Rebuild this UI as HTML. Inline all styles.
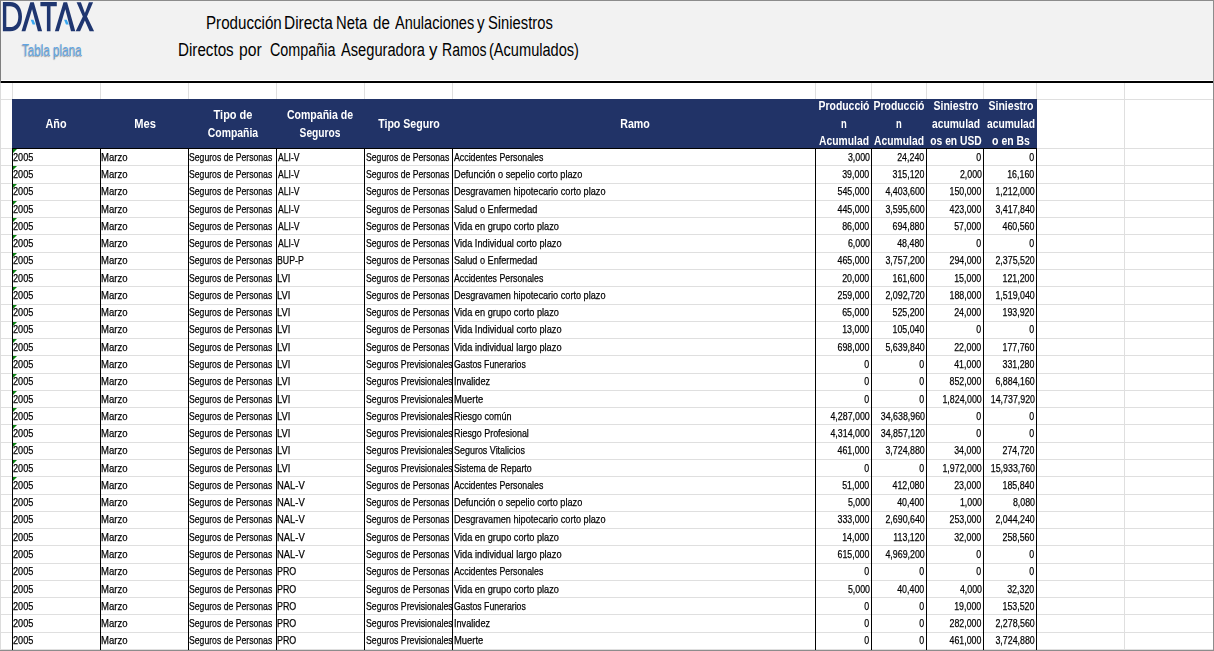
<!DOCTYPE html><html><head><meta charset="utf-8"><title>DATAX</title><style>
*{margin:0;padding:0;box-sizing:border-box}
html,body{width:1214px;height:651px;overflow:hidden;background:#fff}
body{position:relative;font-family:"Liberation Sans",sans-serif;color:#000}
.a{position:absolute}
.top{left:0;top:0;width:1214px;height:80px;background:#f2f2f2}
.bl{left:0;top:81px;width:1214px;height:2px;background:#000}
.t{position:absolute;white-space:nowrap;display:block;line-height:1}
.hl{position:absolute;left:0;width:1214px;height:1px;background:#dfdfdf}
.vl{position:absolute;width:1px;background:#dfdfdf}
.vb{position:absolute;width:1px;background:#000}
.c{position:absolute;overflow:hidden}
.c span{position:absolute;white-space:nowrap;line-height:1;-webkit-text-stroke:0.25px #000;font-size:11.2px;bottom:0}
.c .l{left:-1px;transform-origin:0 100%;transform:scaleX(0.8)}
.c .r{right:1.4px;transform-origin:100% 100%;transform:scaleX(0.79)}
.tri{position:absolute;width:0;height:0;border-top:4px solid #0a8212;border-right:4px solid transparent}
.hd{position:absolute;background:#213367;top:99px;height:50px}
.h{position:absolute;color:#fff;font-weight:bold;white-space:nowrap;line-height:1;font-size:12.0px;text-align:center;transform-origin:50% 50%;transform:translateX(-50%) scaleX(0.88)}
</style></head><body><div id="wrap" style="position:absolute;left:0;top:0;width:1214px;height:651px;opacity:0.999">
<div class="a top"></div>
<div class="a bl"></div>
<svg class="a" style="left:0;top:0" width="100" height="36" viewBox="0 0 100 36">
<g fill="#3aa8f0">
<path d="M30.7 19.8 H33.4 L35.4 24.4 H32.6 Z"/>
<path d="M64.1 19.8 H66.8 L68.8 24.4 H66 Z"/>
</g>
<g fill="#1f3670">
<path d="M2.9 2.1 H10.2 C17.6 2.1 22 8 22 16.7 C22 25.4 17.6 31.3 10.2 31.3 H2.9 Z M6.3 6.2 V27.1 H10 C15.2 27.1 18.3 23.3 18.3 16.7 C18.3 10 15.2 6.2 10 6.2 Z" fill-rule="evenodd"/>
<path d="M21.5 31.3 L30.3 2.3 H33.8 L42.1 31.3 H37.9 L32.05 9.2 L25.4 31.3 Z"/>
<path d="M40.4 2.1 H56.8 V6.3 H50.5 V31.3 H46.9 V6.3 H40.4 Z"/>
<path d="M54.9 31.3 L63.5 2.3 H67.1 L75.3 31.3 H71 L65.3 9.2 L58.8 31.3 Z"/>
<path d="M76.6 2.3 H80.9 L84.9 12.9 L88.9 2.3 H93.1 L87 16.6 L94.1 31.3 H89.6 L84.9 20.4 L80.1 31.3 H75.7 L82.8 16.6 Z"/>
</g>
</svg>
<div class="t" id="tp" style="left:22px;top:42.2px;font-size:16.2px;color:#5fa5e3;text-shadow:-0.6px 0.9px 1.2px rgba(0,0,0,.38);transform-origin:0 50%;transform:scaleX(0.72)">Tabla plana</div>

<div class="t" style="left:205.64px;top:14.4px;font-size:18px;transform-origin:0 50%;transform:scaleX(0.8412)">Producción</div>
<div class="t" style="left:283.52px;top:14.4px;font-size:18px;transform-origin:0 50%;transform:scaleX(0.8559)">Directa</div>
<div class="t" style="left:335.97px;top:14.4px;font-size:18px;transform-origin:0 50%;transform:scaleX(0.8219)">Neta</div>
<div class="t" style="left:373.17px;top:14.4px;font-size:18px;transform-origin:0 50%;transform:scaleX(0.8378)">de</div>
<div class="t" style="left:394.5px;top:14.4px;font-size:18px;transform-origin:0 50%;transform:scaleX(0.8072)">Anulaciones</div>
<div class="t" style="left:477.09px;top:14.4px;font-size:18px;transform-origin:0 50%;transform:scaleX(0.8457)">y</div>
<div class="t" style="left:487.98px;top:14.4px;font-size:18px;transform-origin:0 50%;transform:scaleX(0.8194)">Siniestros</div>
<div class="t" style="left:178.33px;top:41.2px;font-size:18px;transform-origin:0 50%;transform:scaleX(0.8438)">Directos</div>
<div class="t" style="left:238.72px;top:41.2px;font-size:18px;transform-origin:0 50%;transform:scaleX(0.8731)">por</div>
<div class="t" style="left:270.2px;top:41.2px;font-size:18px;transform-origin:0 50%;transform:scaleX(0.7975)">Compañia</div>
<div class="t" style="left:341.4px;top:41.2px;font-size:18px;transform-origin:0 50%;transform:scaleX(0.8145)">Aseguradora</div>
<div class="t" style="left:429.08px;top:41.2px;font-size:18px;transform-origin:0 50%;transform:scaleX(0.9371)">y</div>
<div class="t" style="left:441.53px;top:41.2px;font-size:18px;transform-origin:0 50%;transform:scaleX(0.78)">Ramos</div>
<div class="t" style="left:489.49px;top:41.2px;font-size:18px;transform-origin:0 50%;transform:scaleX(0.8101)">(Acumulados)</div>
<div class="hl" style="top:99px"></div>
<div class="hl" style="top:148px"></div>
<div class="hl" style="top:165px"></div>
<div class="hl" style="top:183px"></div>
<div class="hl" style="top:200px"></div>
<div class="hl" style="top:217px"></div>
<div class="hl" style="top:234px"></div>
<div class="hl" style="top:252px"></div>
<div class="hl" style="top:269px"></div>
<div class="hl" style="top:286px"></div>
<div class="hl" style="top:304px"></div>
<div class="hl" style="top:321px"></div>
<div class="hl" style="top:338px"></div>
<div class="hl" style="top:355px"></div>
<div class="hl" style="top:373px"></div>
<div class="hl" style="top:390px"></div>
<div class="hl" style="top:407px"></div>
<div class="hl" style="top:424px"></div>
<div class="hl" style="top:442px"></div>
<div class="hl" style="top:459px"></div>
<div class="hl" style="top:476px"></div>
<div class="hl" style="top:494px"></div>
<div class="hl" style="top:511px"></div>
<div class="hl" style="top:528px"></div>
<div class="hl" style="top:545px"></div>
<div class="hl" style="top:563px"></div>
<div class="hl" style="top:580px"></div>
<div class="hl" style="top:597px"></div>
<div class="hl" style="top:614px"></div>
<div class="hl" style="top:632px"></div>
<div class="hl" style="top:649px"></div>
<div class="vl" style="left:12px;top:83px;height:568px"></div>
<div class="vl" style="left:100px;top:83px;height:568px"></div>
<div class="vl" style="left:188px;top:83px;height:568px"></div>
<div class="vl" style="left:276px;top:83px;height:568px"></div>
<div class="vl" style="left:364px;top:83px;height:568px"></div>
<div class="vl" style="left:452px;top:83px;height:568px"></div>
<div class="vl" style="left:815px;top:83px;height:568px"></div>
<div class="vl" style="left:871px;top:83px;height:568px"></div>
<div class="vl" style="left:926px;top:83px;height:568px"></div>
<div class="vl" style="left:983px;top:83px;height:568px"></div>
<div class="vl" style="left:1036px;top:83px;height:568px"></div>
<div class="vl" style="left:1124px;top:83px;height:568px"></div>
<div class="hd" style="left:12px;width:1025px"></div>
<div class="h" style="left:56.3px;top:118.30px;transform:translateX(-50%) scaleX(0.9022)">Año</div>
<div class="h" style="left:144.6px;top:118.30px;transform:translateX(-50%) scaleX(0.9266)">Mes</div>
<div class="h" style="left:233px;top:108.90px;transform:translateX(-50%) scaleX(0.9146)">Tipo de</div>
<div class="h" style="left:233px;top:126.50px;transform:translateX(-50%) scaleX(0.8677)">Compañia</div>
<div class="h" style="left:320.3px;top:108.90px;transform:translateX(-50%) scaleX(0.8779)">Compañia de</div>
<div class="h" style="left:320.3px;top:126.50px;transform:translateX(-50%) scaleX(0.8509)">Seguros</div>
<div class="h" style="left:408.8px;top:118.30px;transform:translateX(-50%) scaleX(0.8839)">Tipo Seguro</div>
<div class="h" style="left:634.7px;top:118.30px;transform:translateX(-50%) scaleX(0.8872)">Ramo</div>
<div class="h" style="left:843.5px;top:100.10px;transform:translateX(-50%) scaleX(0.8678)">Producció</div>
<div class="h" style="left:843.5px;top:117.70px;transform:translateX(-50%) scaleX(0.783)">n</div>
<div class="h" style="left:843.5px;top:135.30px;transform:translateX(-50%) scaleX(0.8598)">Acumulad</div>
<div class="h" style="left:899px;top:100.10px;transform:translateX(-50%) scaleX(0.8678)">Producció</div>
<div class="h" style="left:899px;top:117.70px;transform:translateX(-50%) scaleX(0.783)">n</div>
<div class="h" style="left:899px;top:135.30px;transform:translateX(-50%) scaleX(0.8598)">Acumulad</div>
<div class="h" style="left:956px;top:100.10px;transform:translateX(-50%) scaleX(0.8772)">Siniestro</div>
<div class="h" style="left:956px;top:117.70px;transform:translateX(-50%) scaleX(0.8565)">acumulad</div>
<div class="h" style="left:956px;top:135.30px;transform:translateX(-50%) scaleX(0.8576)">os en USD</div>
<div class="h" style="left:1010.5px;top:100.10px;transform:translateX(-50%) scaleX(0.8772)">Siniestro</div>
<div class="h" style="left:1010.5px;top:117.70px;transform:translateX(-50%) scaleX(0.8565)">acumulad</div>
<div class="h" style="left:1010.5px;top:135.30px;transform:translateX(-50%) scaleX(0.8732)">o en Bs</div>
<div class="c" style="left:13px;top:149px;width:87px;height:16px"><span class="l" style="bottom:2.30px;left:-0.11px;transform:scaleX(0.8209)">2005</span></div>
<div class="c" style="left:101px;top:149px;width:87px;height:16px"><span class="l" style="bottom:2.30px;left:-0.15px;transform:scaleX(0.8538)">Marzo</span></div>
<div class="c" style="left:189px;top:149px;width:87px;height:16px"><span class="l" style="bottom:2.30px;left:0.21px;transform:scaleX(0.7738)">Seguros de Personas</span></div>
<div class="c" style="left:277px;top:149px;width:87px;height:16px"><span class="l" style="bottom:2.30px;left:0.80px;transform:scaleX(0.7713)">ALI-V</span></div>
<div class="c" style="left:365px;top:149px;width:87px;height:16px"><span class="l" style="bottom:2.30px;left:0.91px;transform:scaleX(0.7738)">Seguros de Personas</span></div>
<div class="c" style="left:453px;top:149px;width:362px;height:16px"><span class="l" style="bottom:2.30px;left:0.79px;transform:scaleX(0.785)">Accidentes Personales</span></div>
<div class="c" style="left:816px;top:149px;width:55px;height:16px"><span class="r" style="bottom:2.30px">3,000</span></div>
<div class="c" style="left:872px;top:149px;width:54px;height:16px"><span class="r" style="bottom:2.30px">24,240</span></div>
<div class="c" style="left:927px;top:149px;width:56px;height:16px"><span class="r" style="bottom:2.30px">0</span></div>
<div class="c" style="left:984px;top:149px;width:52px;height:16px"><span class="r" style="bottom:2.30px">0</span></div>
<div class="tri" style="left:13px;top:149px"></div>
<div class="c" style="left:13px;top:166px;width:87px;height:17px"><span class="l" style="bottom:3.30px;left:-0.11px;transform:scaleX(0.8209)">2005</span></div>
<div class="c" style="left:101px;top:166px;width:87px;height:17px"><span class="l" style="bottom:3.30px;left:-0.15px;transform:scaleX(0.8538)">Marzo</span></div>
<div class="c" style="left:189px;top:166px;width:87px;height:17px"><span class="l" style="bottom:3.30px;left:0.21px;transform:scaleX(0.7738)">Seguros de Personas</span></div>
<div class="c" style="left:277px;top:166px;width:87px;height:17px"><span class="l" style="bottom:3.30px;left:0.80px;transform:scaleX(0.7713)">ALI-V</span></div>
<div class="c" style="left:365px;top:166px;width:87px;height:17px"><span class="l" style="bottom:3.30px;left:0.91px;transform:scaleX(0.7738)">Seguros de Personas</span></div>
<div class="c" style="left:453px;top:166px;width:362px;height:17px"><span class="l" style="bottom:3.30px;left:0.78px;transform:scaleX(0.822)">Defunción o sepelio corto plazo</span></div>
<div class="c" style="left:816px;top:166px;width:55px;height:17px"><span class="r" style="bottom:3.30px">39,000</span></div>
<div class="c" style="left:872px;top:166px;width:54px;height:17px"><span class="r" style="bottom:3.30px">315,120</span></div>
<div class="c" style="left:927px;top:166px;width:56px;height:17px"><span class="r" style="bottom:3.30px">2,000</span></div>
<div class="c" style="left:984px;top:166px;width:52px;height:17px"><span class="r" style="bottom:3.30px">16,160</span></div>
<div class="tri" style="left:13px;top:166px"></div>
<div class="c" style="left:13px;top:184px;width:87px;height:16px"><span class="l" style="bottom:3.30px;left:-0.11px;transform:scaleX(0.8209)">2005</span></div>
<div class="c" style="left:101px;top:184px;width:87px;height:16px"><span class="l" style="bottom:3.30px;left:-0.15px;transform:scaleX(0.8538)">Marzo</span></div>
<div class="c" style="left:189px;top:184px;width:87px;height:16px"><span class="l" style="bottom:3.30px;left:0.21px;transform:scaleX(0.7738)">Seguros de Personas</span></div>
<div class="c" style="left:277px;top:184px;width:87px;height:16px"><span class="l" style="bottom:3.30px;left:0.80px;transform:scaleX(0.7713)">ALI-V</span></div>
<div class="c" style="left:365px;top:184px;width:87px;height:16px"><span class="l" style="bottom:3.30px;left:0.91px;transform:scaleX(0.7738)">Seguros de Personas</span></div>
<div class="c" style="left:453px;top:184px;width:362px;height:16px"><span class="l" style="bottom:3.30px;left:0.78px;transform:scaleX(0.8174)">Desgravamen hipotecario corto plazo</span></div>
<div class="c" style="left:816px;top:184px;width:55px;height:16px"><span class="r" style="bottom:3.30px">545,000</span></div>
<div class="c" style="left:872px;top:184px;width:54px;height:16px"><span class="r" style="bottom:3.30px">4,403,600</span></div>
<div class="c" style="left:927px;top:184px;width:56px;height:16px"><span class="r" style="bottom:3.30px">150,000</span></div>
<div class="c" style="left:984px;top:184px;width:52px;height:16px"><span class="r" style="bottom:3.30px">1,212,000</span></div>
<div class="tri" style="left:13px;top:184px"></div>
<div class="c" style="left:13px;top:201px;width:87px;height:16px"><span class="l" style="bottom:2.30px;left:-0.11px;transform:scaleX(0.8209)">2005</span></div>
<div class="c" style="left:101px;top:201px;width:87px;height:16px"><span class="l" style="bottom:2.30px;left:-0.15px;transform:scaleX(0.8538)">Marzo</span></div>
<div class="c" style="left:189px;top:201px;width:87px;height:16px"><span class="l" style="bottom:2.30px;left:0.21px;transform:scaleX(0.7738)">Seguros de Personas</span></div>
<div class="c" style="left:277px;top:201px;width:87px;height:16px"><span class="l" style="bottom:2.30px;left:0.80px;transform:scaleX(0.7713)">ALI-V</span></div>
<div class="c" style="left:365px;top:201px;width:87px;height:16px"><span class="l" style="bottom:2.30px;left:0.91px;transform:scaleX(0.7738)">Seguros de Personas</span></div>
<div class="c" style="left:453px;top:201px;width:362px;height:16px"><span class="l" style="bottom:2.30px;left:1.09px;transform:scaleX(0.8169)">Salud o Enfermedad</span></div>
<div class="c" style="left:816px;top:201px;width:55px;height:16px"><span class="r" style="bottom:2.30px">445,000</span></div>
<div class="c" style="left:872px;top:201px;width:54px;height:16px"><span class="r" style="bottom:2.30px">3,595,600</span></div>
<div class="c" style="left:927px;top:201px;width:56px;height:16px"><span class="r" style="bottom:2.30px">423,000</span></div>
<div class="c" style="left:984px;top:201px;width:52px;height:16px"><span class="r" style="bottom:2.30px">3,417,840</span></div>
<div class="tri" style="left:13px;top:201px"></div>
<div class="c" style="left:13px;top:218px;width:87px;height:16px"><span class="l" style="bottom:2.30px;left:-0.11px;transform:scaleX(0.8209)">2005</span></div>
<div class="c" style="left:101px;top:218px;width:87px;height:16px"><span class="l" style="bottom:2.30px;left:-0.15px;transform:scaleX(0.8538)">Marzo</span></div>
<div class="c" style="left:189px;top:218px;width:87px;height:16px"><span class="l" style="bottom:2.30px;left:0.21px;transform:scaleX(0.7738)">Seguros de Personas</span></div>
<div class="c" style="left:277px;top:218px;width:87px;height:16px"><span class="l" style="bottom:2.30px;left:0.80px;transform:scaleX(0.7713)">ALI-V</span></div>
<div class="c" style="left:365px;top:218px;width:87px;height:16px"><span class="l" style="bottom:2.30px;left:0.91px;transform:scaleX(0.7738)">Seguros de Personas</span></div>
<div class="c" style="left:453px;top:218px;width:362px;height:16px"><span class="l" style="bottom:2.30px;left:1.40px;transform:scaleX(0.8244)">Vida en grupo corto plazo</span></div>
<div class="c" style="left:816px;top:218px;width:55px;height:16px"><span class="r" style="bottom:2.30px">86,000</span></div>
<div class="c" style="left:872px;top:218px;width:54px;height:16px"><span class="r" style="bottom:2.30px">694,880</span></div>
<div class="c" style="left:927px;top:218px;width:56px;height:16px"><span class="r" style="bottom:2.30px">57,000</span></div>
<div class="c" style="left:984px;top:218px;width:52px;height:16px"><span class="r" style="bottom:2.30px">460,560</span></div>
<div class="tri" style="left:13px;top:218px"></div>
<div class="c" style="left:13px;top:235px;width:87px;height:17px"><span class="l" style="bottom:3.30px;left:-0.11px;transform:scaleX(0.8209)">2005</span></div>
<div class="c" style="left:101px;top:235px;width:87px;height:17px"><span class="l" style="bottom:3.30px;left:-0.15px;transform:scaleX(0.8538)">Marzo</span></div>
<div class="c" style="left:189px;top:235px;width:87px;height:17px"><span class="l" style="bottom:3.30px;left:0.21px;transform:scaleX(0.7738)">Seguros de Personas</span></div>
<div class="c" style="left:277px;top:235px;width:87px;height:17px"><span class="l" style="bottom:3.30px;left:0.80px;transform:scaleX(0.7713)">ALI-V</span></div>
<div class="c" style="left:365px;top:235px;width:87px;height:17px"><span class="l" style="bottom:3.30px;left:0.91px;transform:scaleX(0.7738)">Seguros de Personas</span></div>
<div class="c" style="left:453px;top:235px;width:362px;height:17px"><span class="l" style="bottom:3.30px;left:1.40px;transform:scaleX(0.8246)">Vida Individual corto plazo</span></div>
<div class="c" style="left:816px;top:235px;width:55px;height:17px"><span class="r" style="bottom:3.30px">6,000</span></div>
<div class="c" style="left:872px;top:235px;width:54px;height:17px"><span class="r" style="bottom:3.30px">48,480</span></div>
<div class="c" style="left:927px;top:235px;width:56px;height:17px"><span class="r" style="bottom:3.30px">0</span></div>
<div class="c" style="left:984px;top:235px;width:52px;height:17px"><span class="r" style="bottom:3.30px">0</span></div>
<div class="tri" style="left:13px;top:235px"></div>
<div class="c" style="left:13px;top:253px;width:87px;height:16px"><span class="l" style="bottom:3.30px;left:-0.11px;transform:scaleX(0.8209)">2005</span></div>
<div class="c" style="left:101px;top:253px;width:87px;height:16px"><span class="l" style="bottom:3.30px;left:-0.15px;transform:scaleX(0.8538)">Marzo</span></div>
<div class="c" style="left:189px;top:253px;width:87px;height:16px"><span class="l" style="bottom:3.30px;left:0.21px;transform:scaleX(0.7738)">Seguros de Personas</span></div>
<div class="c" style="left:277px;top:253px;width:87px;height:16px"><span class="l" style="bottom:3.30px;left:0.11px;transform:scaleX(0.7817)">BUP-P</span></div>
<div class="c" style="left:365px;top:253px;width:87px;height:16px"><span class="l" style="bottom:3.30px;left:0.91px;transform:scaleX(0.7738)">Seguros de Personas</span></div>
<div class="c" style="left:453px;top:253px;width:362px;height:16px"><span class="l" style="bottom:3.30px;left:1.09px;transform:scaleX(0.8169)">Salud o Enfermedad</span></div>
<div class="c" style="left:816px;top:253px;width:55px;height:16px"><span class="r" style="bottom:3.30px">465,000</span></div>
<div class="c" style="left:872px;top:253px;width:54px;height:16px"><span class="r" style="bottom:3.30px">3,757,200</span></div>
<div class="c" style="left:927px;top:253px;width:56px;height:16px"><span class="r" style="bottom:3.30px">294,000</span></div>
<div class="c" style="left:984px;top:253px;width:52px;height:16px"><span class="r" style="bottom:3.30px">2,375,520</span></div>
<div class="tri" style="left:13px;top:253px"></div>
<div class="c" style="left:13px;top:270px;width:87px;height:16px"><span class="l" style="bottom:2.30px;left:-0.11px;transform:scaleX(0.8209)">2005</span></div>
<div class="c" style="left:101px;top:270px;width:87px;height:16px"><span class="l" style="bottom:2.30px;left:-0.15px;transform:scaleX(0.8538)">Marzo</span></div>
<div class="c" style="left:189px;top:270px;width:87px;height:16px"><span class="l" style="bottom:2.30px;left:0.21px;transform:scaleX(0.7738)">Seguros de Personas</span></div>
<div class="c" style="left:277px;top:270px;width:87px;height:16px"><span class="l" style="bottom:2.30px;left:0.06px;transform:scaleX(0.8354)">LVI</span></div>
<div class="c" style="left:365px;top:270px;width:87px;height:16px"><span class="l" style="bottom:2.30px;left:0.91px;transform:scaleX(0.7738)">Seguros de Personas</span></div>
<div class="c" style="left:453px;top:270px;width:362px;height:16px"><span class="l" style="bottom:2.30px;left:0.79px;transform:scaleX(0.785)">Accidentes Personales</span></div>
<div class="c" style="left:816px;top:270px;width:55px;height:16px"><span class="r" style="bottom:2.30px">20,000</span></div>
<div class="c" style="left:872px;top:270px;width:54px;height:16px"><span class="r" style="bottom:2.30px">161,600</span></div>
<div class="c" style="left:927px;top:270px;width:56px;height:16px"><span class="r" style="bottom:2.30px">15,000</span></div>
<div class="c" style="left:984px;top:270px;width:52px;height:16px"><span class="r" style="bottom:2.30px">121,200</span></div>
<div class="tri" style="left:13px;top:270px"></div>
<div class="c" style="left:13px;top:287px;width:87px;height:17px"><span class="l" style="bottom:3.30px;left:-0.11px;transform:scaleX(0.8209)">2005</span></div>
<div class="c" style="left:101px;top:287px;width:87px;height:17px"><span class="l" style="bottom:3.30px;left:-0.15px;transform:scaleX(0.8538)">Marzo</span></div>
<div class="c" style="left:189px;top:287px;width:87px;height:17px"><span class="l" style="bottom:3.30px;left:0.21px;transform:scaleX(0.7738)">Seguros de Personas</span></div>
<div class="c" style="left:277px;top:287px;width:87px;height:17px"><span class="l" style="bottom:3.30px;left:0.06px;transform:scaleX(0.8354)">LVI</span></div>
<div class="c" style="left:365px;top:287px;width:87px;height:17px"><span class="l" style="bottom:3.30px;left:0.91px;transform:scaleX(0.7738)">Seguros de Personas</span></div>
<div class="c" style="left:453px;top:287px;width:362px;height:17px"><span class="l" style="bottom:3.30px;left:0.78px;transform:scaleX(0.8174)">Desgravamen hipotecario corto plazo</span></div>
<div class="c" style="left:816px;top:287px;width:55px;height:17px"><span class="r" style="bottom:3.30px">259,000</span></div>
<div class="c" style="left:872px;top:287px;width:54px;height:17px"><span class="r" style="bottom:3.30px">2,092,720</span></div>
<div class="c" style="left:927px;top:287px;width:56px;height:17px"><span class="r" style="bottom:3.30px">188,000</span></div>
<div class="c" style="left:984px;top:287px;width:52px;height:17px"><span class="r" style="bottom:3.30px">1,519,040</span></div>
<div class="tri" style="left:13px;top:287px"></div>
<div class="c" style="left:13px;top:305px;width:87px;height:16px"><span class="l" style="bottom:3.30px;left:-0.11px;transform:scaleX(0.8209)">2005</span></div>
<div class="c" style="left:101px;top:305px;width:87px;height:16px"><span class="l" style="bottom:3.30px;left:-0.15px;transform:scaleX(0.8538)">Marzo</span></div>
<div class="c" style="left:189px;top:305px;width:87px;height:16px"><span class="l" style="bottom:3.30px;left:0.21px;transform:scaleX(0.7738)">Seguros de Personas</span></div>
<div class="c" style="left:277px;top:305px;width:87px;height:16px"><span class="l" style="bottom:3.30px;left:0.06px;transform:scaleX(0.8354)">LVI</span></div>
<div class="c" style="left:365px;top:305px;width:87px;height:16px"><span class="l" style="bottom:3.30px;left:0.91px;transform:scaleX(0.7738)">Seguros de Personas</span></div>
<div class="c" style="left:453px;top:305px;width:362px;height:16px"><span class="l" style="bottom:3.30px;left:1.40px;transform:scaleX(0.8244)">Vida en grupo corto plazo</span></div>
<div class="c" style="left:816px;top:305px;width:55px;height:16px"><span class="r" style="bottom:3.30px">65,000</span></div>
<div class="c" style="left:872px;top:305px;width:54px;height:16px"><span class="r" style="bottom:3.30px">525,200</span></div>
<div class="c" style="left:927px;top:305px;width:56px;height:16px"><span class="r" style="bottom:3.30px">24,000</span></div>
<div class="c" style="left:984px;top:305px;width:52px;height:16px"><span class="r" style="bottom:3.30px">193,920</span></div>
<div class="tri" style="left:13px;top:305px"></div>
<div class="c" style="left:13px;top:322px;width:87px;height:16px"><span class="l" style="bottom:3.30px;left:-0.11px;transform:scaleX(0.8209)">2005</span></div>
<div class="c" style="left:101px;top:322px;width:87px;height:16px"><span class="l" style="bottom:3.30px;left:-0.15px;transform:scaleX(0.8538)">Marzo</span></div>
<div class="c" style="left:189px;top:322px;width:87px;height:16px"><span class="l" style="bottom:3.30px;left:0.21px;transform:scaleX(0.7738)">Seguros de Personas</span></div>
<div class="c" style="left:277px;top:322px;width:87px;height:16px"><span class="l" style="bottom:3.30px;left:0.06px;transform:scaleX(0.8354)">LVI</span></div>
<div class="c" style="left:365px;top:322px;width:87px;height:16px"><span class="l" style="bottom:3.30px;left:0.91px;transform:scaleX(0.7738)">Seguros de Personas</span></div>
<div class="c" style="left:453px;top:322px;width:362px;height:16px"><span class="l" style="bottom:3.30px;left:1.40px;transform:scaleX(0.8246)">Vida Individual corto plazo</span></div>
<div class="c" style="left:816px;top:322px;width:55px;height:16px"><span class="r" style="bottom:3.30px">13,000</span></div>
<div class="c" style="left:872px;top:322px;width:54px;height:16px"><span class="r" style="bottom:3.30px">105,040</span></div>
<div class="c" style="left:927px;top:322px;width:56px;height:16px"><span class="r" style="bottom:3.30px">0</span></div>
<div class="c" style="left:984px;top:322px;width:52px;height:16px"><span class="r" style="bottom:3.30px">0</span></div>
<div class="tri" style="left:13px;top:322px"></div>
<div class="c" style="left:13px;top:339px;width:87px;height:16px"><span class="l" style="bottom:2.30px;left:-0.11px;transform:scaleX(0.8209)">2005</span></div>
<div class="c" style="left:101px;top:339px;width:87px;height:16px"><span class="l" style="bottom:2.30px;left:-0.15px;transform:scaleX(0.8538)">Marzo</span></div>
<div class="c" style="left:189px;top:339px;width:87px;height:16px"><span class="l" style="bottom:2.30px;left:0.21px;transform:scaleX(0.7738)">Seguros de Personas</span></div>
<div class="c" style="left:277px;top:339px;width:87px;height:16px"><span class="l" style="bottom:2.30px;left:0.06px;transform:scaleX(0.8354)">LVI</span></div>
<div class="c" style="left:365px;top:339px;width:87px;height:16px"><span class="l" style="bottom:2.30px;left:0.91px;transform:scaleX(0.7738)">Seguros de Personas</span></div>
<div class="c" style="left:453px;top:339px;width:362px;height:16px"><span class="l" style="bottom:2.30px;left:1.40px;transform:scaleX(0.8286)">Vida individual largo plazo</span></div>
<div class="c" style="left:816px;top:339px;width:55px;height:16px"><span class="r" style="bottom:2.30px">698,000</span></div>
<div class="c" style="left:872px;top:339px;width:54px;height:16px"><span class="r" style="bottom:2.30px">5,639,840</span></div>
<div class="c" style="left:927px;top:339px;width:56px;height:16px"><span class="r" style="bottom:2.30px">22,000</span></div>
<div class="c" style="left:984px;top:339px;width:52px;height:16px"><span class="r" style="bottom:2.30px">177,760</span></div>
<div class="tri" style="left:13px;top:339px"></div>
<div class="c" style="left:13px;top:356px;width:87px;height:17px"><span class="l" style="bottom:3.30px;left:-0.11px;transform:scaleX(0.8209)">2005</span></div>
<div class="c" style="left:101px;top:356px;width:87px;height:17px"><span class="l" style="bottom:3.30px;left:-0.15px;transform:scaleX(0.8538)">Marzo</span></div>
<div class="c" style="left:189px;top:356px;width:87px;height:17px"><span class="l" style="bottom:3.30px;left:0.21px;transform:scaleX(0.7738)">Seguros de Personas</span></div>
<div class="c" style="left:277px;top:356px;width:87px;height:17px"><span class="l" style="bottom:3.30px;left:0.06px;transform:scaleX(0.8354)">LVI</span></div>
<div class="c" style="left:365px;top:356px;width:87px;height:17px"><span class="l" style="bottom:3.30px;left:0.91px;transform:scaleX(0.7783)">Seguros Previsionales</span></div>
<div class="c" style="left:453px;top:356px;width:362px;height:17px"><span class="l" style="bottom:3.30px;left:1.02px;transform:scaleX(0.7802)">Gastos Funerarios</span></div>
<div class="c" style="left:816px;top:356px;width:55px;height:17px"><span class="r" style="bottom:3.30px">0</span></div>
<div class="c" style="left:872px;top:356px;width:54px;height:17px"><span class="r" style="bottom:3.30px">0</span></div>
<div class="c" style="left:927px;top:356px;width:56px;height:17px"><span class="r" style="bottom:3.30px">41,000</span></div>
<div class="c" style="left:984px;top:356px;width:52px;height:17px"><span class="r" style="bottom:3.30px">331,280</span></div>
<div class="tri" style="left:13px;top:356px"></div>
<div class="c" style="left:13px;top:374px;width:87px;height:16px"><span class="l" style="bottom:3.30px;left:-0.11px;transform:scaleX(0.8209)">2005</span></div>
<div class="c" style="left:101px;top:374px;width:87px;height:16px"><span class="l" style="bottom:3.30px;left:-0.15px;transform:scaleX(0.8538)">Marzo</span></div>
<div class="c" style="left:189px;top:374px;width:87px;height:16px"><span class="l" style="bottom:3.30px;left:0.21px;transform:scaleX(0.7738)">Seguros de Personas</span></div>
<div class="c" style="left:277px;top:374px;width:87px;height:16px"><span class="l" style="bottom:3.30px;left:0.06px;transform:scaleX(0.8354)">LVI</span></div>
<div class="c" style="left:365px;top:374px;width:87px;height:16px"><span class="l" style="bottom:3.30px;left:0.91px;transform:scaleX(0.7783)">Seguros Previsionales</span></div>
<div class="c" style="left:453px;top:374px;width:362px;height:16px"><span class="l" style="bottom:3.30px;left:0.68px;transform:scaleX(0.8164)">Invalidez</span></div>
<div class="c" style="left:816px;top:374px;width:55px;height:16px"><span class="r" style="bottom:3.30px">0</span></div>
<div class="c" style="left:872px;top:374px;width:54px;height:16px"><span class="r" style="bottom:3.30px">0</span></div>
<div class="c" style="left:927px;top:374px;width:56px;height:16px"><span class="r" style="bottom:3.30px">852,000</span></div>
<div class="c" style="left:984px;top:374px;width:52px;height:16px"><span class="r" style="bottom:3.30px">6,884,160</span></div>
<div class="tri" style="left:13px;top:374px"></div>
<div class="c" style="left:13px;top:391px;width:87px;height:16px"><span class="l" style="bottom:2.30px;left:-0.11px;transform:scaleX(0.8209)">2005</span></div>
<div class="c" style="left:101px;top:391px;width:87px;height:16px"><span class="l" style="bottom:2.30px;left:-0.15px;transform:scaleX(0.8538)">Marzo</span></div>
<div class="c" style="left:189px;top:391px;width:87px;height:16px"><span class="l" style="bottom:2.30px;left:0.21px;transform:scaleX(0.7738)">Seguros de Personas</span></div>
<div class="c" style="left:277px;top:391px;width:87px;height:16px"><span class="l" style="bottom:2.30px;left:0.06px;transform:scaleX(0.8354)">LVI</span></div>
<div class="c" style="left:365px;top:391px;width:87px;height:16px"><span class="l" style="bottom:2.30px;left:0.91px;transform:scaleX(0.7783)">Seguros Previsionales</span></div>
<div class="c" style="left:453px;top:391px;width:362px;height:16px"><span class="l" style="bottom:2.30px;left:0.76px;transform:scaleX(0.8388)">Muerte</span></div>
<div class="c" style="left:816px;top:391px;width:55px;height:16px"><span class="r" style="bottom:2.30px">0</span></div>
<div class="c" style="left:872px;top:391px;width:54px;height:16px"><span class="r" style="bottom:2.30px">0</span></div>
<div class="c" style="left:927px;top:391px;width:56px;height:16px"><span class="r" style="bottom:2.30px">1,824,000</span></div>
<div class="c" style="left:984px;top:391px;width:52px;height:16px"><span class="r" style="bottom:2.30px">14,737,920</span></div>
<div class="tri" style="left:13px;top:391px"></div>
<div class="c" style="left:13px;top:408px;width:87px;height:16px"><span class="l" style="bottom:2.30px;left:-0.11px;transform:scaleX(0.8209)">2005</span></div>
<div class="c" style="left:101px;top:408px;width:87px;height:16px"><span class="l" style="bottom:2.30px;left:-0.15px;transform:scaleX(0.8538)">Marzo</span></div>
<div class="c" style="left:189px;top:408px;width:87px;height:16px"><span class="l" style="bottom:2.30px;left:0.21px;transform:scaleX(0.7738)">Seguros de Personas</span></div>
<div class="c" style="left:277px;top:408px;width:87px;height:16px"><span class="l" style="bottom:2.30px;left:0.06px;transform:scaleX(0.8354)">LVI</span></div>
<div class="c" style="left:365px;top:408px;width:87px;height:16px"><span class="l" style="bottom:2.30px;left:0.91px;transform:scaleX(0.7783)">Seguros Previsionales</span></div>
<div class="c" style="left:453px;top:408px;width:362px;height:16px"><span class="l" style="bottom:2.30px;left:0.79px;transform:scaleX(0.8057)">Riesgo común</span></div>
<div class="c" style="left:816px;top:408px;width:55px;height:16px"><span class="r" style="bottom:2.30px">4,287,000</span></div>
<div class="c" style="left:872px;top:408px;width:54px;height:16px"><span class="r" style="bottom:2.30px">34,638,960</span></div>
<div class="c" style="left:927px;top:408px;width:56px;height:16px"><span class="r" style="bottom:2.30px">0</span></div>
<div class="c" style="left:984px;top:408px;width:52px;height:16px"><span class="r" style="bottom:2.30px">0</span></div>
<div class="tri" style="left:13px;top:408px"></div>
<div class="c" style="left:13px;top:425px;width:87px;height:17px"><span class="l" style="bottom:3.30px;left:-0.11px;transform:scaleX(0.8209)">2005</span></div>
<div class="c" style="left:101px;top:425px;width:87px;height:17px"><span class="l" style="bottom:3.30px;left:-0.15px;transform:scaleX(0.8538)">Marzo</span></div>
<div class="c" style="left:189px;top:425px;width:87px;height:17px"><span class="l" style="bottom:3.30px;left:0.21px;transform:scaleX(0.7738)">Seguros de Personas</span></div>
<div class="c" style="left:277px;top:425px;width:87px;height:17px"><span class="l" style="bottom:3.30px;left:0.06px;transform:scaleX(0.8354)">LVI</span></div>
<div class="c" style="left:365px;top:425px;width:87px;height:17px"><span class="l" style="bottom:3.30px;left:0.91px;transform:scaleX(0.7783)">Seguros Previsionales</span></div>
<div class="c" style="left:453px;top:425px;width:362px;height:17px"><span class="l" style="bottom:3.30px;left:0.80px;transform:scaleX(0.7968)">Riesgo Profesional</span></div>
<div class="c" style="left:816px;top:425px;width:55px;height:17px"><span class="r" style="bottom:3.30px">4,314,000</span></div>
<div class="c" style="left:872px;top:425px;width:54px;height:17px"><span class="r" style="bottom:3.30px">34,857,120</span></div>
<div class="c" style="left:927px;top:425px;width:56px;height:17px"><span class="r" style="bottom:3.30px">0</span></div>
<div class="c" style="left:984px;top:425px;width:52px;height:17px"><span class="r" style="bottom:3.30px">0</span></div>
<div class="tri" style="left:13px;top:425px"></div>
<div class="c" style="left:13px;top:443px;width:87px;height:16px"><span class="l" style="bottom:3.30px;left:-0.11px;transform:scaleX(0.8209)">2005</span></div>
<div class="c" style="left:101px;top:443px;width:87px;height:16px"><span class="l" style="bottom:3.30px;left:-0.15px;transform:scaleX(0.8538)">Marzo</span></div>
<div class="c" style="left:189px;top:443px;width:87px;height:16px"><span class="l" style="bottom:3.30px;left:0.21px;transform:scaleX(0.7738)">Seguros de Personas</span></div>
<div class="c" style="left:277px;top:443px;width:87px;height:16px"><span class="l" style="bottom:3.30px;left:0.06px;transform:scaleX(0.8354)">LVI</span></div>
<div class="c" style="left:365px;top:443px;width:87px;height:16px"><span class="l" style="bottom:3.30px;left:0.91px;transform:scaleX(0.7783)">Seguros Previsionales</span></div>
<div class="c" style="left:453px;top:443px;width:362px;height:16px"><span class="l" style="bottom:3.30px;left:1.10px;transform:scaleX(0.8)">Seguros Vitalicios</span></div>
<div class="c" style="left:816px;top:443px;width:55px;height:16px"><span class="r" style="bottom:3.30px">461,000</span></div>
<div class="c" style="left:872px;top:443px;width:54px;height:16px"><span class="r" style="bottom:3.30px">3,724,880</span></div>
<div class="c" style="left:927px;top:443px;width:56px;height:16px"><span class="r" style="bottom:3.30px">34,000</span></div>
<div class="c" style="left:984px;top:443px;width:52px;height:16px"><span class="r" style="bottom:3.30px">274,720</span></div>
<div class="tri" style="left:13px;top:443px"></div>
<div class="c" style="left:13px;top:460px;width:87px;height:16px"><span class="l" style="bottom:2.30px;left:-0.11px;transform:scaleX(0.8209)">2005</span></div>
<div class="c" style="left:101px;top:460px;width:87px;height:16px"><span class="l" style="bottom:2.30px;left:-0.15px;transform:scaleX(0.8538)">Marzo</span></div>
<div class="c" style="left:189px;top:460px;width:87px;height:16px"><span class="l" style="bottom:2.30px;left:0.21px;transform:scaleX(0.7738)">Seguros de Personas</span></div>
<div class="c" style="left:277px;top:460px;width:87px;height:16px"><span class="l" style="bottom:2.30px;left:0.06px;transform:scaleX(0.8354)">LVI</span></div>
<div class="c" style="left:365px;top:460px;width:87px;height:16px"><span class="l" style="bottom:2.30px;left:0.91px;transform:scaleX(0.7783)">Seguros Previsionales</span></div>
<div class="c" style="left:453px;top:460px;width:362px;height:16px"><span class="l" style="bottom:2.30px;left:1.11px;transform:scaleX(0.7857)">Sistema de Reparto</span></div>
<div class="c" style="left:816px;top:460px;width:55px;height:16px"><span class="r" style="bottom:2.30px">0</span></div>
<div class="c" style="left:872px;top:460px;width:54px;height:16px"><span class="r" style="bottom:2.30px">0</span></div>
<div class="c" style="left:927px;top:460px;width:56px;height:16px"><span class="r" style="bottom:2.30px">1,972,000</span></div>
<div class="c" style="left:984px;top:460px;width:52px;height:16px"><span class="r" style="bottom:2.30px">15,933,760</span></div>
<div class="tri" style="left:13px;top:460px"></div>
<div class="c" style="left:13px;top:477px;width:87px;height:17px"><span class="l" style="bottom:3.30px;left:-0.11px;transform:scaleX(0.8209)">2005</span></div>
<div class="c" style="left:101px;top:477px;width:87px;height:17px"><span class="l" style="bottom:3.30px;left:-0.15px;transform:scaleX(0.8538)">Marzo</span></div>
<div class="c" style="left:189px;top:477px;width:87px;height:17px"><span class="l" style="bottom:3.30px;left:0.21px;transform:scaleX(0.7738)">Seguros de Personas</span></div>
<div class="c" style="left:277px;top:477px;width:87px;height:17px"><span class="l" style="bottom:3.30px;left:0.06px;transform:scaleX(0.8406)">NAL-V</span></div>
<div class="c" style="left:365px;top:477px;width:87px;height:17px"><span class="l" style="bottom:3.30px;left:0.91px;transform:scaleX(0.7738)">Seguros de Personas</span></div>
<div class="c" style="left:453px;top:477px;width:362px;height:17px"><span class="l" style="bottom:3.30px;left:0.79px;transform:scaleX(0.785)">Accidentes Personales</span></div>
<div class="c" style="left:816px;top:477px;width:55px;height:17px"><span class="r" style="bottom:3.30px">51,000</span></div>
<div class="c" style="left:872px;top:477px;width:54px;height:17px"><span class="r" style="bottom:3.30px">412,080</span></div>
<div class="c" style="left:927px;top:477px;width:56px;height:17px"><span class="r" style="bottom:3.30px">23,000</span></div>
<div class="c" style="left:984px;top:477px;width:52px;height:17px"><span class="r" style="bottom:3.30px">185,840</span></div>
<div class="tri" style="left:13px;top:477px"></div>
<div class="c" style="left:13px;top:495px;width:87px;height:16px"><span class="l" style="bottom:3.30px;left:-0.11px;transform:scaleX(0.8209)">2005</span></div>
<div class="c" style="left:101px;top:495px;width:87px;height:16px"><span class="l" style="bottom:3.30px;left:-0.15px;transform:scaleX(0.8538)">Marzo</span></div>
<div class="c" style="left:189px;top:495px;width:87px;height:16px"><span class="l" style="bottom:3.30px;left:0.21px;transform:scaleX(0.7738)">Seguros de Personas</span></div>
<div class="c" style="left:277px;top:495px;width:87px;height:16px"><span class="l" style="bottom:3.30px;left:0.06px;transform:scaleX(0.8406)">NAL-V</span></div>
<div class="c" style="left:365px;top:495px;width:87px;height:16px"><span class="l" style="bottom:3.30px;left:0.91px;transform:scaleX(0.7738)">Seguros de Personas</span></div>
<div class="c" style="left:453px;top:495px;width:362px;height:16px"><span class="l" style="bottom:3.30px;left:0.78px;transform:scaleX(0.822)">Defunción o sepelio corto plazo</span></div>
<div class="c" style="left:816px;top:495px;width:55px;height:16px"><span class="r" style="bottom:3.30px">5,000</span></div>
<div class="c" style="left:872px;top:495px;width:54px;height:16px"><span class="r" style="bottom:3.30px">40,400</span></div>
<div class="c" style="left:927px;top:495px;width:56px;height:16px"><span class="r" style="bottom:3.30px">1,000</span></div>
<div class="c" style="left:984px;top:495px;width:52px;height:16px"><span class="r" style="bottom:3.30px">8,080</span></div>
<div class="c" style="left:13px;top:512px;width:87px;height:16px"><span class="l" style="bottom:3.30px;left:-0.11px;transform:scaleX(0.8209)">2005</span></div>
<div class="c" style="left:101px;top:512px;width:87px;height:16px"><span class="l" style="bottom:3.30px;left:-0.15px;transform:scaleX(0.8538)">Marzo</span></div>
<div class="c" style="left:189px;top:512px;width:87px;height:16px"><span class="l" style="bottom:3.30px;left:0.21px;transform:scaleX(0.7738)">Seguros de Personas</span></div>
<div class="c" style="left:277px;top:512px;width:87px;height:16px"><span class="l" style="bottom:3.30px;left:0.06px;transform:scaleX(0.8406)">NAL-V</span></div>
<div class="c" style="left:365px;top:512px;width:87px;height:16px"><span class="l" style="bottom:3.30px;left:0.91px;transform:scaleX(0.7738)">Seguros de Personas</span></div>
<div class="c" style="left:453px;top:512px;width:362px;height:16px"><span class="l" style="bottom:3.30px;left:0.78px;transform:scaleX(0.8174)">Desgravamen hipotecario corto plazo</span></div>
<div class="c" style="left:816px;top:512px;width:55px;height:16px"><span class="r" style="bottom:3.30px">333,000</span></div>
<div class="c" style="left:872px;top:512px;width:54px;height:16px"><span class="r" style="bottom:3.30px">2,690,640</span></div>
<div class="c" style="left:927px;top:512px;width:56px;height:16px"><span class="r" style="bottom:3.30px">253,000</span></div>
<div class="c" style="left:984px;top:512px;width:52px;height:16px"><span class="r" style="bottom:3.30px">2,044,240</span></div>
<div class="c" style="left:13px;top:529px;width:87px;height:16px"><span class="l" style="bottom:2.30px;left:-0.11px;transform:scaleX(0.8209)">2005</span></div>
<div class="c" style="left:101px;top:529px;width:87px;height:16px"><span class="l" style="bottom:2.30px;left:-0.15px;transform:scaleX(0.8538)">Marzo</span></div>
<div class="c" style="left:189px;top:529px;width:87px;height:16px"><span class="l" style="bottom:2.30px;left:0.21px;transform:scaleX(0.7738)">Seguros de Personas</span></div>
<div class="c" style="left:277px;top:529px;width:87px;height:16px"><span class="l" style="bottom:2.30px;left:0.06px;transform:scaleX(0.8406)">NAL-V</span></div>
<div class="c" style="left:365px;top:529px;width:87px;height:16px"><span class="l" style="bottom:2.30px;left:0.91px;transform:scaleX(0.7738)">Seguros de Personas</span></div>
<div class="c" style="left:453px;top:529px;width:362px;height:16px"><span class="l" style="bottom:2.30px;left:1.40px;transform:scaleX(0.8244)">Vida en grupo corto plazo</span></div>
<div class="c" style="left:816px;top:529px;width:55px;height:16px"><span class="r" style="bottom:2.30px">14,000</span></div>
<div class="c" style="left:872px;top:529px;width:54px;height:16px"><span class="r" style="bottom:2.30px">113,120</span></div>
<div class="c" style="left:927px;top:529px;width:56px;height:16px"><span class="r" style="bottom:2.30px">32,000</span></div>
<div class="c" style="left:984px;top:529px;width:52px;height:16px"><span class="r" style="bottom:2.30px">258,560</span></div>
<div class="c" style="left:13px;top:546px;width:87px;height:17px"><span class="l" style="bottom:3.30px;left:-0.11px;transform:scaleX(0.8209)">2005</span></div>
<div class="c" style="left:101px;top:546px;width:87px;height:17px"><span class="l" style="bottom:3.30px;left:-0.15px;transform:scaleX(0.8538)">Marzo</span></div>
<div class="c" style="left:189px;top:546px;width:87px;height:17px"><span class="l" style="bottom:3.30px;left:0.21px;transform:scaleX(0.7738)">Seguros de Personas</span></div>
<div class="c" style="left:277px;top:546px;width:87px;height:17px"><span class="l" style="bottom:3.30px;left:0.06px;transform:scaleX(0.8406)">NAL-V</span></div>
<div class="c" style="left:365px;top:546px;width:87px;height:17px"><span class="l" style="bottom:3.30px;left:0.91px;transform:scaleX(0.7738)">Seguros de Personas</span></div>
<div class="c" style="left:453px;top:546px;width:362px;height:17px"><span class="l" style="bottom:3.30px;left:1.40px;transform:scaleX(0.8286)">Vida individual largo plazo</span></div>
<div class="c" style="left:816px;top:546px;width:55px;height:17px"><span class="r" style="bottom:3.30px">615,000</span></div>
<div class="c" style="left:872px;top:546px;width:54px;height:17px"><span class="r" style="bottom:3.30px">4,969,200</span></div>
<div class="c" style="left:927px;top:546px;width:56px;height:17px"><span class="r" style="bottom:3.30px">0</span></div>
<div class="c" style="left:984px;top:546px;width:52px;height:17px"><span class="r" style="bottom:3.30px">0</span></div>
<div class="c" style="left:13px;top:564px;width:87px;height:16px"><span class="l" style="bottom:3.30px;left:-0.11px;transform:scaleX(0.8209)">2005</span></div>
<div class="c" style="left:101px;top:564px;width:87px;height:16px"><span class="l" style="bottom:3.30px;left:-0.15px;transform:scaleX(0.8538)">Marzo</span></div>
<div class="c" style="left:189px;top:564px;width:87px;height:16px"><span class="l" style="bottom:3.30px;left:0.21px;transform:scaleX(0.7738)">Seguros de Personas</span></div>
<div class="c" style="left:277px;top:564px;width:87px;height:16px"><span class="l" style="bottom:3.30px;left:0.10px;transform:scaleX(0.7956)">PRO</span></div>
<div class="c" style="left:365px;top:564px;width:87px;height:16px"><span class="l" style="bottom:3.30px;left:0.91px;transform:scaleX(0.7738)">Seguros de Personas</span></div>
<div class="c" style="left:453px;top:564px;width:362px;height:16px"><span class="l" style="bottom:3.30px;left:0.79px;transform:scaleX(0.785)">Accidentes Personales</span></div>
<div class="c" style="left:816px;top:564px;width:55px;height:16px"><span class="r" style="bottom:3.30px">0</span></div>
<div class="c" style="left:872px;top:564px;width:54px;height:16px"><span class="r" style="bottom:3.30px">0</span></div>
<div class="c" style="left:927px;top:564px;width:56px;height:16px"><span class="r" style="bottom:3.30px">0</span></div>
<div class="c" style="left:984px;top:564px;width:52px;height:16px"><span class="r" style="bottom:3.30px">0</span></div>
<div class="c" style="left:13px;top:581px;width:87px;height:16px"><span class="l" style="bottom:2.30px;left:-0.11px;transform:scaleX(0.8209)">2005</span></div>
<div class="c" style="left:101px;top:581px;width:87px;height:16px"><span class="l" style="bottom:2.30px;left:-0.15px;transform:scaleX(0.8538)">Marzo</span></div>
<div class="c" style="left:189px;top:581px;width:87px;height:16px"><span class="l" style="bottom:2.30px;left:0.21px;transform:scaleX(0.7738)">Seguros de Personas</span></div>
<div class="c" style="left:277px;top:581px;width:87px;height:16px"><span class="l" style="bottom:2.30px;left:0.10px;transform:scaleX(0.7956)">PRO</span></div>
<div class="c" style="left:365px;top:581px;width:87px;height:16px"><span class="l" style="bottom:2.30px;left:0.91px;transform:scaleX(0.7738)">Seguros de Personas</span></div>
<div class="c" style="left:453px;top:581px;width:362px;height:16px"><span class="l" style="bottom:2.30px;left:1.40px;transform:scaleX(0.8244)">Vida en grupo corto plazo</span></div>
<div class="c" style="left:816px;top:581px;width:55px;height:16px"><span class="r" style="bottom:2.30px">5,000</span></div>
<div class="c" style="left:872px;top:581px;width:54px;height:16px"><span class="r" style="bottom:2.30px">40,400</span></div>
<div class="c" style="left:927px;top:581px;width:56px;height:16px"><span class="r" style="bottom:2.30px">4,000</span></div>
<div class="c" style="left:984px;top:581px;width:52px;height:16px"><span class="r" style="bottom:2.30px">32,320</span></div>
<div class="c" style="left:13px;top:598px;width:87px;height:16px"><span class="l" style="bottom:2.30px;left:-0.11px;transform:scaleX(0.8209)">2005</span></div>
<div class="c" style="left:101px;top:598px;width:87px;height:16px"><span class="l" style="bottom:2.30px;left:-0.15px;transform:scaleX(0.8538)">Marzo</span></div>
<div class="c" style="left:189px;top:598px;width:87px;height:16px"><span class="l" style="bottom:2.30px;left:0.21px;transform:scaleX(0.7738)">Seguros de Personas</span></div>
<div class="c" style="left:277px;top:598px;width:87px;height:16px"><span class="l" style="bottom:2.30px;left:0.10px;transform:scaleX(0.7956)">PRO</span></div>
<div class="c" style="left:365px;top:598px;width:87px;height:16px"><span class="l" style="bottom:2.30px;left:0.91px;transform:scaleX(0.7783)">Seguros Previsionales</span></div>
<div class="c" style="left:453px;top:598px;width:362px;height:16px"><span class="l" style="bottom:2.30px;left:1.02px;transform:scaleX(0.7802)">Gastos Funerarios</span></div>
<div class="c" style="left:816px;top:598px;width:55px;height:16px"><span class="r" style="bottom:2.30px">0</span></div>
<div class="c" style="left:872px;top:598px;width:54px;height:16px"><span class="r" style="bottom:2.30px">0</span></div>
<div class="c" style="left:927px;top:598px;width:56px;height:16px"><span class="r" style="bottom:2.30px">19,000</span></div>
<div class="c" style="left:984px;top:598px;width:52px;height:16px"><span class="r" style="bottom:2.30px">153,520</span></div>
<div class="c" style="left:13px;top:615px;width:87px;height:17px"><span class="l" style="bottom:3.30px;left:-0.11px;transform:scaleX(0.8209)">2005</span></div>
<div class="c" style="left:101px;top:615px;width:87px;height:17px"><span class="l" style="bottom:3.30px;left:-0.15px;transform:scaleX(0.8538)">Marzo</span></div>
<div class="c" style="left:189px;top:615px;width:87px;height:17px"><span class="l" style="bottom:3.30px;left:0.21px;transform:scaleX(0.7738)">Seguros de Personas</span></div>
<div class="c" style="left:277px;top:615px;width:87px;height:17px"><span class="l" style="bottom:3.30px;left:0.10px;transform:scaleX(0.7956)">PRO</span></div>
<div class="c" style="left:365px;top:615px;width:87px;height:17px"><span class="l" style="bottom:3.30px;left:0.91px;transform:scaleX(0.7783)">Seguros Previsionales</span></div>
<div class="c" style="left:453px;top:615px;width:362px;height:17px"><span class="l" style="bottom:3.30px;left:0.68px;transform:scaleX(0.8164)">Invalidez</span></div>
<div class="c" style="left:816px;top:615px;width:55px;height:17px"><span class="r" style="bottom:3.30px">0</span></div>
<div class="c" style="left:872px;top:615px;width:54px;height:17px"><span class="r" style="bottom:3.30px">0</span></div>
<div class="c" style="left:927px;top:615px;width:56px;height:17px"><span class="r" style="bottom:3.30px">282,000</span></div>
<div class="c" style="left:984px;top:615px;width:52px;height:17px"><span class="r" style="bottom:3.30px">2,278,560</span></div>
<div class="c" style="left:13px;top:633px;width:87px;height:16px"><span class="l" style="bottom:3.30px;left:-0.11px;transform:scaleX(0.8209)">2005</span></div>
<div class="c" style="left:101px;top:633px;width:87px;height:16px"><span class="l" style="bottom:3.30px;left:-0.15px;transform:scaleX(0.8538)">Marzo</span></div>
<div class="c" style="left:189px;top:633px;width:87px;height:16px"><span class="l" style="bottom:3.30px;left:0.21px;transform:scaleX(0.7738)">Seguros de Personas</span></div>
<div class="c" style="left:277px;top:633px;width:87px;height:16px"><span class="l" style="bottom:3.30px;left:0.10px;transform:scaleX(0.7956)">PRO</span></div>
<div class="c" style="left:365px;top:633px;width:87px;height:16px"><span class="l" style="bottom:3.30px;left:0.91px;transform:scaleX(0.7783)">Seguros Previsionales</span></div>
<div class="c" style="left:453px;top:633px;width:362px;height:16px"><span class="l" style="bottom:3.30px;left:0.76px;transform:scaleX(0.8388)">Muerte</span></div>
<div class="c" style="left:816px;top:633px;width:55px;height:16px"><span class="r" style="bottom:3.30px">0</span></div>
<div class="c" style="left:872px;top:633px;width:54px;height:16px"><span class="r" style="bottom:3.30px">0</span></div>
<div class="c" style="left:927px;top:633px;width:56px;height:16px"><span class="r" style="bottom:3.30px">461,000</span></div>
<div class="c" style="left:984px;top:633px;width:52px;height:16px"><span class="r" style="bottom:3.30px">3,724,880</span></div>
<div class="a" style="left:12px;top:148px;width:1025px;height:1px;background:#000"></div>
<div class="vb" style="left:12px;top:148px;height:502px"></div>
<div class="vb" style="left:100px;top:148px;height:502px"></div>
<div class="vb" style="left:188px;top:148px;height:502px"></div>
<div class="vb" style="left:276px;top:148px;height:502px"></div>
<div class="vb" style="left:364px;top:148px;height:502px"></div>
<div class="vb" style="left:452px;top:148px;height:502px"></div>
<div class="vb" style="left:815px;top:148px;height:502px"></div>
<div class="vb" style="left:871px;top:148px;height:502px"></div>
<div class="vb" style="left:926px;top:148px;height:502px"></div>
<div class="vb" style="left:983px;top:148px;height:502px"></div>
<div class="vb" style="left:1036px;top:148px;height:502px"></div>
<div class="a" style="left:0;top:0;width:1214px;height:1px;background:#8c8c8c"></div>
<div class="a" style="left:0;top:0;width:1px;height:83px;background:#7f7f7f"></div>
<div class="a" style="left:0;top:83px;width:1px;height:568px;background:#dcdcdc"></div>
<div class="a" style="left:1213px;top:0;width:1px;height:651px;background:#8c8c8c"></div>
<div class="a" style="left:0;top:650px;width:1214px;height:1px;background:#8c8c8c"></div>
</div></body></html>
